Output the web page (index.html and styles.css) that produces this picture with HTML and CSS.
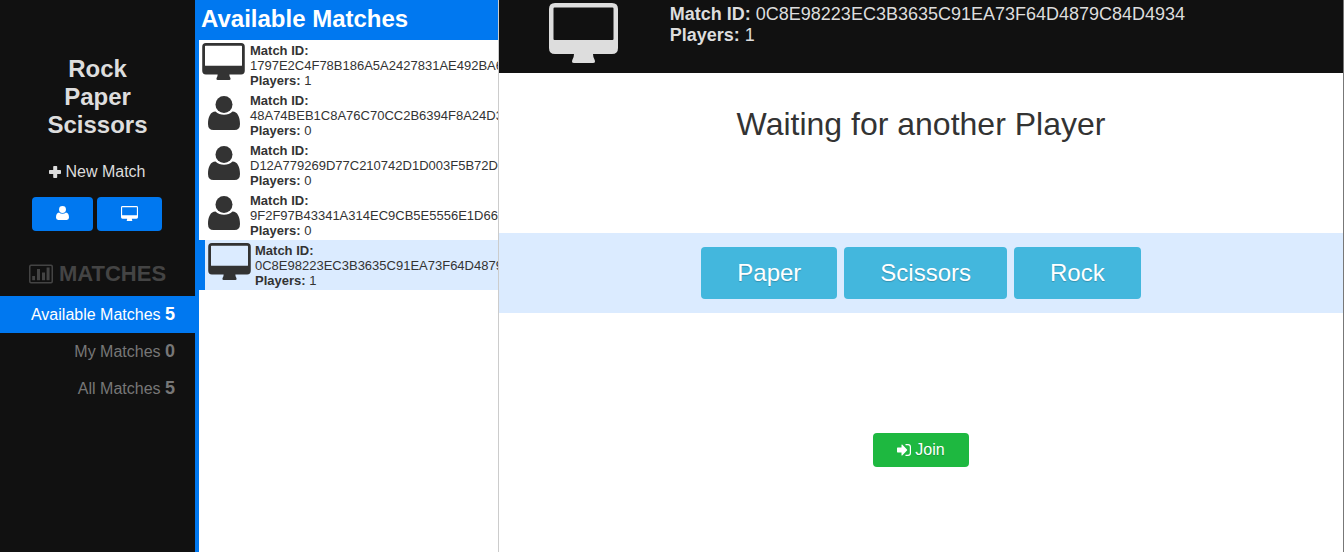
FILE: index.html
```html
<!DOCTYPE html>
<html lang="en">
<head>
<meta charset="utf-8">
<title>Rock Paper Scissors</title>
<link rel="stylesheet" href="styles.css">
</head>
<body>
<svg class="sprite" aria-hidden="true">
  <symbol id="desktop" viewBox="0 0 69 60">
    <path fill-rule="evenodd" d="M6 0H63Q69 0 69 6V45Q69 51 63 51H44Q44 54 45.500 56.500Q47 60 44 60H25Q22 60 23.500 56.500Q25 54 25 51H6Q0 51 0 45V6Q0 0 6 0ZM5.500 4.500Q4.500 4.500 4.500 5.500V36Q4.500 37 5.500 37H63.500Q64.500 37 64.500 36V5.500Q64.500 4.500 63.500 4.500Z"/>
  </symbol>
  <symbol id="user" viewBox="0 0 32 34">
    <circle cx="16" cy="8.500" r="8.500"/>
    <path d="M7.500 15.500Q11 18.800 16 18.800T24.500 15.500C29.500 15.500 32 21 32 28Q32 34 26.500 34H5.500Q0 34 0 28C0 21 2.500 15.500 7.500 15.500Z"/>
  </symbol>
  <symbol id="plus" viewBox="0 0 12 12">
    <path d="M5 0H7.500Q8.200 0 8.200 .8V4H11.200Q12 4 12 4.800V7.200Q12 8 11.200 8H8.200V11.200Q8.200 12 7.400 12H5Q4.200 12 4.200 11.200V8H.8Q0 8 0 7.200V4.800Q0 4 .8 4H4.200V.8Q4.200 0 5 0Z"/>
  </symbol>
  <symbol id="chart" viewBox="0 0 24 20">
    <path fill-rule="evenodd" d="M2 .5H22Q24 .5 24 2.500V17.500Q24 19.500 22 19.500H2Q0 19.500 0 17.500V2.500Q0 .5 2 .5ZM2.200 2Q1.500 2 1.500 2.700V17.300Q1.500 18 2.200 18H21.800Q22.500 18 22.500 17.300V2.700Q22.500 2 21.800 2ZM3.200 12H6V16.200H3.200ZM8 5H11V16.200H8ZM13 8.500H16V16.200H13ZM17.600 3.500H20.600V16.200H17.600Z"/>
  </symbol>
  <symbol id="signin" viewBox="0 0 14 12">
    <path d="M0 4.200Q0 3.600 .6 3.600H4.500V1Q4.500 .2 5.200 .6L10 5.400Q10.500 6 10 6.600L5.200 11.400Q4.500 11.800 4.500 11V8.400H.6Q0 8.400 0 7.800Z"/>
    <path d="M8.500 .6H11Q13.400 .6 13.400 3V9Q13.400 11.400 11 11.400H8.500" fill="none" stroke="currentColor" stroke-width="1.200"/>
  </symbol>
</svg>
<div class="app">
  <aside class="sidebar">
    <h1 class="brand">Rock<br>Paper<br>Scissors</h1>
    <p class="new-match"><svg class="icon icon-plus"><use href="#plus"/></svg> New Match</p>
    <div class="new-buttons">
      <button class="btn btn-primary" type="button" aria-label="New match against a player"><svg class="icon icon-user-small"><use href="#user"/></svg></button>
      <button class="btn btn-primary" type="button" aria-label="New match against the computer"><svg class="icon icon-desktop-small"><use href="#desktop"/></svg></button>
    </div>
    <h2 class="menu-title"><svg class="icon icon-chart"><use href="#chart"/></svg>MATCHES</h2>
    <nav class="menu">
      <a class="menu-link menu-link-active" href="#available">Available Matches <b class="count">5</b></a>
      <a class="menu-link" href="#mine">My Matches <b class="count">0</b></a>
      <a class="menu-link" href="#all">All Matches <b class="count">5</b></a>
    </nav>
  </aside>
  <section class="matches">
    <h2 class="matches-title">Available Matches</h2>
    <ul class="match-list">
      <li class="match"><span class="match-icon"><svg class="icon icon-desktop"><use href="#desktop"/></svg></span><div class="match-text"><b>Match ID:</b><br>1797E2C4F78B186A5A2427831AE492BA6<br><b>Players:</b> 1</div></li>
      <li class="match"><span class="match-icon"><svg class="icon icon-user"><use href="#user"/></svg></span><div class="match-text"><b>Match ID:</b><br>48A74BEB1C8A76C70CC2B6394F8A24D3<br><b>Players:</b> 0</div></li>
      <li class="match"><span class="match-icon"><svg class="icon icon-user"><use href="#user"/></svg></span><div class="match-text"><b>Match ID:</b><br>D12A779269D77C210742D1D003F5B72D3<br><b>Players:</b> 0</div></li>
      <li class="match"><span class="match-icon"><svg class="icon icon-user"><use href="#user"/></svg></span><div class="match-text"><b>Match ID:</b><br>9F2F97B43341A314EC9CB5E5556E1D66F<br><b>Players:</b> 0</div></li>
      <li class="match match-active"><span class="match-icon"><svg class="icon icon-desktop"><use href="#desktop"/></svg></span><div class="match-text"><b>Match ID:</b><br>0C8E98223EC3B3635C91EA73F64D4879C84D4934<br><b>Players:</b> 1</div></li>
    </ul>
  </section>
  <main class="game">
    <header class="game-header">
      <div class="game-icon"><svg class="icon icon-desktop-large"><use href="#desktop"/></svg></div>
      <div class="game-info"><b>Match ID:</b> 0C8E98223EC3B3635C91EA73F64D4879C84D4934<br><b>Players:</b> 1</div>
    </header>
    <h2 class="status">Waiting for another Player</h2>
    <div class="moves">
      <button class="btn btn-move" type="button">Paper</button>
      <button class="btn btn-move" type="button">Scissors</button>
      <button class="btn btn-move" type="button">Rock</button>
    </div>
    <div class="join">
      <button class="btn btn-join" type="button"><svg class="icon icon-signin"><use href="#signin"/></svg>Join</button>
    </div>
  </main>
</div>
</body>
</html>
```
FILE: styles.css
```css
* { box-sizing: border-box; }

body {
  margin: 0;
  color: #333;
  background: #fff;
  font-family: "Liberation Sans", Arial, sans-serif;
  font-size: 16px;
}

.sprite { display: none; }
.icon { display: block; flex: none; fill: currentColor; }
.icon-plus { width: 12px; height: 12px; }
.icon-user-small { width: 13px; height: 14px; }
.icon-desktop-small { width: 17px; height: 15px; }
.icon-chart { width: 24px; height: 20px; }
.icon-desktop { width: 43px; height: 37px; }
.icon-user { width: 32px; height: 34px; }
.icon-desktop-large { width: 69px; height: 60px; }
.icon-signin { width: 14px; height: 12px; }

.app {
  display: grid;
  grid-template-columns: 195px 304px minmax(0, 1fr);
  min-height: 100vh;
}

.sidebar { background: #111; color: #ddd; }

.brand {
  margin: 0;
  padding-top: 55px;
  font-size: 24px;
  line-height: 28px;
  text-align: center;
}

.new-match {
  display: flex;
  align-items: center;
  justify-content: center;
  gap: 4px;
  margin: 22px 0 15px;
  line-height: 21px;
}

.btn {
  display: flex;
  align-items: center;
  justify-content: center;
  border: 0;
  border-radius: 4px;
  color: #fff;
  font-family: inherit;
  text-shadow: 0 1px 1px rgba(0, 0, 0, 0.2);
}

.new-buttons {
  display: flex;
  justify-content: center;
  gap: 4px;
  padding-right: 2px;
}
.btn-primary {
  height: 34px;
  padding: 0 24px 2px;
  background: #0078f0;
}

.menu-title {
  display: flex;
  align-items: center;
  justify-content: center;
  gap: 6px;
  margin: 30px 0 9px;
  color: #444;
  font-size: 22px;
  line-height: 26px;
}

.menu-link {
  display: block;
  height: 37px;
  padding-right: 20px;
  color: #777;
  line-height: 37px;
  text-align: right;
  text-decoration: none;
}
.menu-link-active { background: #0078f0; color: #fff; }
.count { font-size: 18px; }

.matches {
  overflow: hidden;
  border-left: 4px solid #0078f0;
  border-right: 1px solid #ccc;
}
.matches-title {
  margin: 0;
  padding: 1px 2px 3px;
  background: #0078f0;
  color: #fff;
  font-size: 24px;
  line-height: 36px;
}
.match-list { margin: 0; padding: 0; list-style: none; }
.match {
  display: flex;
  gap: 5px;
  height: 50px;
  padding: 3px 0 2px 3px;
  font-size: 13px;
  line-height: 15px;
  white-space: nowrap;
}
.match-active {
  gap: 4px;
  border-left: 6px solid #0078f0;
  background: #dbebff;
}
.match-icon { display: flex; flex: none; justify-content: center; width: 43px; }
.match-icon .icon-user { margin-top: 3px; }

.game { border-right: 1px solid #777; }
.game-header {
  display: grid;
  grid-template-columns: 1fr 4fr;
  min-height: 73px;
  padding: 3px 0;
  background: #111;
  color: #ddd;
}
.game-icon { display: flex; justify-content: center; }
.game-info {
  padding: 1px 0 0 2px;
  font-size: 18px;
  line-height: 21px;
}

.status {
  margin: 0;
  padding: 30px 0 88px;
  font-size: 32px;
  font-weight: 400;
  line-height: 42px;
  text-align: center;
}
.moves {
  display: flex;
  justify-content: center;
  gap: 7px;
  padding: 14px 0;
  background: #dbebff;
}
.btn-move {
  height: 52px;
  padding: 0 36px;
  background: #43b7dd;
  font-size: 24px;
}
.join { display: flex; justify-content: center; padding-top: 120px; }
.btn-join {
  gap: 4px;
  height: 34px;
  padding: 0 24px;
  background: #1eb840;
  font-size: 16px;
}
```
